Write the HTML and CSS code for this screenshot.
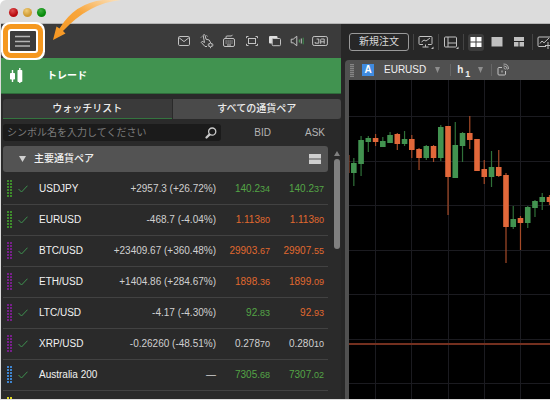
FILE: index.html
```html
<!DOCTYPE html>
<html lang="ja">
<head>
<meta charset="utf-8">
<title>トレード</title>
<meta name="viewport" content="width=device-width, initial-scale=1">
<link rel="stylesheet" href="styles.css">
</head>
<body>
<div class="window">
  <header class="titlebar">
    <span class="light light-red"></span>
    <span class="light light-yellow"></span>
    <span class="light light-green"></span>
  </header>
  <div class="workspace">
    <section class="sidebar">
      <div class="side-toolbar">
        <button class="menu-button" aria-label="メニュー">
          <svg width="16" height="12" viewBox="0 0 16 12"><path d="M0 1.5h15M0 6.5h15M0 11h15" stroke="#b4b4b4" stroke-width="1.3" fill="none"/></svg>
        </button>
        <div class="side-icons">
          <button class="icon" aria-label="メール"><svg width="16" height="16" viewBox="0 0 16 16"><rect x="2.5" y="3.5" width="11" height="9" rx="1.2"/><path d="M2.8 4.5 8 8.6l5.2-4.1"/></svg></button>
          <button class="icon" aria-label="操作設定"><svg width="16" height="16" viewBox="0 0 16 16"><path d="M8 13.5H6L2.2 9.3l1-1 2.3 1.2L4.2 2.6c0-1.3 1.6-1.4 1.9-.2L7 6.2l3.2.8 1 2M2 4.5l1-1M7.5 2.5l1 .8"/><circle cx="11.5" cy="12" r="1.8"/><path d="M11.5 9v1M11.5 14v1.2M8.6 12h1M13.5 12h1M9.5 10l.7.7M13 10.6l.6-.6M9.5 14l.7-.7M13 13.4l.6.6"/></svg></button>
          <button class="icon" aria-label="キーボード"><svg width="16" height="16" viewBox="0 0 16 16"><rect x="2.5" y="5.5" width="11" height="8" rx="1.5"/><path d="M5 5.2V4q0-1 1-1h4q1 0 1.5-1.2"/><path d="M4.5 8h7M4.5 10h7" stroke-dasharray="1.2 .8"/><path d="M6 12h4"/></svg></button>
          <button class="icon" aria-label="全画面"><svg width="16" height="16" viewBox="0 0 16 16"><rect x="4.5" y="5.5" width="7" height="5"/><path d="M2.5 5.2V3.5h2M11.5 3.5h2v1.7M2.5 10.8v1.7h2M11.5 12.5h2v-1.7"/></svg></button>
          <button class="icon" aria-label="ウィンドウ"><svg width="16" height="16" viewBox="0 0 16 16"><rect x="2" y="3" width="8.5" height="7.5" rx="1" fill="#dedede" stroke="none"/><rect x="5.2" y="5.5" width="8.3" height="7.2" rx="1" fill="#3b3b3b"/></svg></button>
          <button class="icon" aria-label="音声"><svg width="16" height="16" viewBox="0 0 16 16"><path d="M2.2 6.2h2l3.6-3v9.6l-3.6-3h-2z"/><path d="M10.3 6.5v3" stroke="#58a862"/><path d="M12.3 5.5v5" stroke="#bdbdbd"/><path d="M14.2 4.7v6.6" stroke="#3f9350"/></svg></button>
          <button class="icon" aria-label="日本語"><svg width="16" height="16" viewBox="0 0 16 16"><rect x=".6" y="3.5" width="14.8" height="9" rx="1.6"/><path d="M3.2 9v1.2h3.6V6M4.6 6h2.2M8.7 10.8V6.6q0-.6.7-.6h2.8v4.8M8.7 8.8h3.5"/></svg></button>
        </div>
      </div>
      <div class="page-head">
        <svg width="16" height="18" viewBox="0 0 16 18"><path d="M3.5 3v12M10.8 1v15" stroke="#fff" stroke-width="1.4"/><rect x="1" y="6" width="5" height="6.5" rx=".8" fill="#fff"/><rect x="8.5" y="3" width="4.8" height="12" rx=".8" fill="#fff"/></svg>
        <h1 class="page-title">トレード</h1>
      </div>
      <div class="tabs">
        <button class="tab tab-active">ウォッチリスト</button>
        <button class="tab">すべての通貨ペア</button>
      </div>
      <div class="search-row">
        <label class="search">
          <input class="search-input" type="text" placeholder="シンボル名を入力してください" aria-label="シンボル検索">
          <svg width="12" height="12" viewBox="0 0 12 12"><circle cx="7.2" cy="4.6" r="3.6" fill="none" stroke="#c8c8c8" stroke-width="1.3"/><path d="M4.4 7.6 1.5 10.5" stroke="#c8c8c8" stroke-width="2.2" stroke-linecap="round"/></svg>
        </label>
        <span class="col-label col-bid">BID</span>
        <span class="col-label col-ask">ASK</span>
      </div>
      <div class="list">
        <div class="list-main">
          <div class="group">
            <svg width="7" height="6" viewBox="0 0 7 6"><path d="M0 0h7L3.5 6z" fill="#d0d0d0"/></svg>
            <span class="group-name">主要通貨ペア</span>
            <svg width="12" height="10" viewBox="0 0 12 10"><path d="M0 0h12v4.4H0zM0 5.6h12V10H0z" fill="#cfcfcf"/></svg>
          </div>
          <table class="quotes">
            <colgroup><col class="c-mark"><col class="c-check"><col><col class="c-change"><col class="c-price"><col class="c-price"></colgroup>
            <tbody>
              <tr><td><i class="dots dots-green"></i></td><td><svg class="check" width="10" height="8" viewBox="0 0 10 8"><path d="M.5 4 3.5 7l6-6.3"/></svg></td><th scope="row">USDJPY</th><td class="num">+2957.3 (+26.72%)</td><td class="num up">140.2<small>34</small></td><td class="num up">140.2<small>37</small></td></tr>
              <tr><td><i class="dots dots-green"></i></td><td><svg class="check" width="10" height="8" viewBox="0 0 10 8"><path d="M.5 4 3.5 7l6-6.3"/></svg></td><th scope="row">EURUSD</th><td class="num">-468.7 (-4.04%)</td><td class="num down">1.113<small>80</small></td><td class="num down">1.113<small>80</small></td></tr>
              <tr><td><i class="dots dots-purple"></i></td><td><svg class="check" width="10" height="8" viewBox="0 0 10 8"><path d="M.5 4 3.5 7l6-6.3"/></svg></td><th scope="row">BTC/USD</th><td class="num">+23409.67 (+360.48%)</td><td class="num down">29903.<small>67</small></td><td class="num down">29907.<small>55</small></td></tr>
              <tr><td><i class="dots dots-purple"></i></td><td><svg class="check" width="10" height="8" viewBox="0 0 10 8"><path d="M.5 4 3.5 7l6-6.3"/></svg></td><th scope="row">ETH/USD</th><td class="num">+1404.86 (+284.67%)</td><td class="num down">1898.<small>36</small></td><td class="num down">1899.<small>09</small></td></tr>
              <tr><td><i class="dots dots-purple"></i></td><td><svg class="check" width="10" height="8" viewBox="0 0 10 8"><path d="M.5 4 3.5 7l6-6.3"/></svg></td><th scope="row">LTC/USD</th><td class="num">-4.17 (-4.30%)</td><td class="num up">92.<small>83</small></td><td class="num down">92.<small>93</small></td></tr>
              <tr><td><i class="dots dots-purple"></i></td><td><svg class="check" width="10" height="8" viewBox="0 0 10 8"><path d="M.5 4 3.5 7l6-6.3"/></svg></td><th scope="row">XRP/USD</th><td class="num">-0.26260 (-48.51%)</td><td class="num">0.278<small>70</small></td><td class="num">0.280<small>10</small></td></tr>
              <tr><td><i class="dots dots-blue"></i></td><td><svg class="check" width="10" height="8" viewBox="0 0 10 8"><path d="M.5 4 3.5 7l6-6.3"/></svg></td><th scope="row">Australia 200</th><td class="num">—</td><td class="num up">7305.<small>68</small></td><td class="num up">7307.<small>02</small></td></tr>
              <tr><td><i class="dots dots-yellow"></i></td><td></td><th></th><td></td><td></td><td></td></tr>
            </tbody>
          </table>
        </div>
        <div class="scrollbar">
          <svg width="6" height="5" viewBox="0 0 6 5"><path d="M3 0l3 5H0z" fill="#808080"/></svg>
          <div class="thumb"></div>
        </div>
      </div>
    </section>
    <main class="main">
      <div class="main-toolbar">
        <button class="order-button">新規注文</button>
        <i class="divider"></i>
        <button class="icon" aria-label="チャート"><svg width="16" height="16" viewBox="0 0 16 16"><path d="M5 10.5H1.8q-.8 0-.8-.8V3.3q0-.8.8-.8h11.4q.8 0 .8.8v6.4q0 .8-.8.8H10M7.5 10.5v2.3M4.5 13h6"/><path d="M3.5 8 6 6l2 1 4-3"/><path d="M15.5 12.5V15H13z" fill="#c2c2c2" stroke="none"/></svg></button>
        <i class="divider"></i>
        <button class="icon" aria-label="レイアウト"><svg width="16" height="16" viewBox="0 0 16 16"><rect x="1.5" y="3" width="12" height="10" rx="1"/><path d="M5 3v10M5 9h8.5"/><path d="M15.5 12.5V15H13z" fill="#c2c2c2" stroke="none"/></svg></button>
        <i class="divider"></i>
        <button class="icon icon-active" aria-label="4分割"><svg width="12" height="10" viewBox="0 0 12 10"><path d="M.5 0h5v4.400h-5zM6.500 0h5v4.400h-5zM.5 5.600h5V10h-5zM6.500 5.600h5V10h-5z" fill="#fff" stroke="none"/></svg></button>
        <button class="icon icon-layout" aria-label="1画面"><svg width="12" height="10" viewBox="0 0 12 10"><path d="M.5 0h11v9.5H.5z" fill="#c0c0c0" stroke="none"/></svg></button>
        <button class="icon icon-layout" aria-label="3分割"><svg width="12" height="10" viewBox="0 0 12 10"><path d="M1 0h10v4H1zM1 5h4.5v4.5H1zM6.5 5H11v4.5H6.5z" fill="#c0c0c0" stroke="none"/></svg></button>
        <i class="divider"></i>
        <button class="icon" aria-label="インジケーター追加"><svg width="16" height="16" viewBox="0 0 16 16"><path d="M9 12.5H2q-1 0-1-1V4q0-1 1-1h12"/><path d="M3 9.5 5 7l2 1.8L12 4M11 8v7M8 11.5h6"/></svg></button>
      </div>
      <div class="chart-head">
        <i class="grip"></i>
        <button class="account">A</button>
        <button class="drop"><span class="symbol">EURUSD</span><svg width="5" height="6" viewBox="0 0 5 6"><path d="M0 0h5L2.500 6z" fill="#8e8e8e"/></svg></button>
        <i class="divider"></i>
        <button class="drop drop-period"><span class="period">h<sub>1</sub></span><svg width="5" height="6" viewBox="0 0 5 6"><path d="M0 0h5L2.500 6z" fill="#8e8e8e"/></svg></button>
        <i class="divider"></i>
        <button class="icon icon-feed" aria-label="共有"><svg width="12" height="14" viewBox="0 0 12 14"><path d="M5 4.500H2q-1 0-1 1V11q0 1 1 1h5.500q1 0 1-1V8"/><path d="M5 7.500v2"/><path d="M6.500 4.800q1.800 0 1.800 1.800M6.500 2.800q3.800 0 3.800 3.800M6.500 1q5 0 5 5" stroke-width=".8"/></svg></button>
      </div>
      <div class="chart"><svg id="chart" width="100%" height="100%"></svg></div>
    </main>
  </div>
  <svg class="arrow" width="76" height="42" viewBox="0 0 76 42">
    <defs><linearGradient id="fade" x1="1" y1="0" x2="0" y2="1"><stop offset="0" stop-color="#fbe3c0"/><stop offset=".45" stop-color="#f8a63c"/><stop offset="1" stop-color="#f5951f"/></linearGradient></defs>
    <path d="M0 40 3.500 26.500 6.500 28.500Q22 3 50 0H68Q36 3 10 31L12.500 33.500z" fill="url(#fade)"/>
  </svg>
</div>
<script src="chart.js"></script>
</body>
</html>
```
FILE: styles.css
```css
* { box-sizing: border-box; }

body {
  margin: 0;
  background: #fff;
  color: #d0d0d0;
  font: 10px/14px "Liberation Sans", "Noto Sans CJK JP", sans-serif;
}

button, input {
  font: inherit;
  color: inherit;
  border: 0;
  margin: 0;
  padding: 0;
  background: none;
}

svg { display: block; flex: none; }

.window {
  position: relative;
  display: flex;
  flex-direction: column;
  height: 100vh;
  overflow: hidden;
  padding: 0 0 1px 1px;
  border-radius: 6px 0 0 0;
  background: #dcdcdc;
}

.titlebar {
  display: flex;
  align-items: center;
  gap: 5px;
  flex: none;
  height: 24px;
  padding: 2px 0 0 8px;
  border-bottom: 1px solid #b4b4b4;
}

.light { width: 9px; height: 9px; border-radius: 50%; }
.light-red { background: radial-gradient(circle at 40% 30%, #e05050, #b80c10 60%); }
.light-yellow { background: radial-gradient(circle at 40% 30%, #f0cc78, #d09c34 60%); }
.light-green { background: radial-gradient(circle at 40% 30%, #40b040, #088a0c 60%); }

.workspace { display: flex; flex: 1; min-height: 0; background: #272727; }

.sidebar {
  display: flex;
  flex-direction: column;
  flex: 0 0 340px;
  min-height: 0;
  background: #2a2a2a;
}

.side-toolbar {
  display: flex;
  align-items: center;
  justify-content: space-between;
  flex: none;
  height: 34px;
  padding: 0 13px 0 7px;
  background: #3b3b3b;
}

.menu-button {
  position: relative;
  z-index: 1;
  display: flex;
  align-items: center;
  justify-content: center;
  width: 30px;
  height: 24px;
  border: 2px solid #fff;
  border-radius: 3px;
  background: #3b3b3b;
  box-shadow: 0 0 0 5px #f5981f, 0 0 0 7px #fff;
}

.side-icons { display: flex; justify-content: space-between; width: 152px; }

.icon { display: flex; align-items: center; justify-content: center; }
.icon svg { fill: none; stroke: #c2c2c2; }

.page-head {
  display: flex;
  align-items: center;
  gap: 22px;
  flex: none;
  height: 36px;
  padding-left: 8px;
  border-bottom: 1px solid #2f6c3b;
  background: #419350;
}

.page-title { margin: 0; color: #fff; font-size: 10px; line-height: 14px; }

.tabs { display: flex; flex: none; margin: 5px 0 0 2px; }

.tab {
  flex: 1;
  height: 20px;
  border-radius: 0 3px 3px 0;
  background: #4a4a4a;
  color: #ececec;
  font-weight: 500;
}

.tab-active {
  margin-right: 1px;
  border-bottom: 1px solid #34743f;
  border-radius: 3px 0 0 0;
  background: #3a3a3a;
}

.search-row {
  display: flex;
  align-items: center;
  flex: none;
  margin: 5px 13px 5px 2px;
}

.search {
  display: flex;
  align-items: center;
  flex: 1;
  height: 17px;
  padding: 0 4px;
  border-radius: 3px;
  background: #1b1b1b;
}

.search-input { flex: 1; min-width: 0; outline: 0; }
.search-input::placeholder { color: #7c7c7c; opacity: 1; }

.col-label { color: #b4b4b4; text-align: right; }
.col-bid { width: 50px; }
.col-ask { width: 54px; margin-right: 3px; }

.list { display: flex; flex: 1; min-height: 0; }
.list-main { flex: 1; padding-left: 2px; overflow: hidden; }

.group {
  display: flex;
  align-items: center;
  gap: 8px;
  height: 26px;
  margin-bottom: 2px;
  padding: 0 7px 0 16px;
  border-radius: 3px;
  background: #535353;
}

.group-name { flex: 1; color: #f0f0f0; font-weight: 500; }

.quotes { width: 100%; border-collapse: separate; border-spacing: 0; table-layout: fixed; }
.quotes tr { height: 31px; }
.quotes td, .quotes th {
  padding: 0;
  border-bottom: 1px solid #424242;
  text-align: left;
  font-weight: 400;
  white-space: nowrap;
}
.quotes th { color: #f2f2f2; }
.quotes .num { padding-right: 4px; text-align: right; }
.quotes .up { color: #54a546; }
.quotes .down { color: #e0692f; }
.quotes small { font-size: 9px; }
.c-mark { width: 15px; }
.c-check { width: 21px; }
.c-change { width: 110px; }
.c-price { width: 54px; }

.dots {
  display: block;
  width: 5px;
  height: 18px;
  margin-left: 4px;
  background:
    repeating-linear-gradient(90deg, transparent 0 2px, #2a2a2a 2px 3px),
    repeating-linear-gradient(currentColor 0 2px, #2a2a2a 2px 3px);
}
.dots-green { color: #3f8c2c; }
.dots-purple { color: #77208a; }
.dots-blue { color: #3f85d0; }
.dots-yellow { color: #e0d820; }

.check { fill: none; stroke: #3f9350; }

.scrollbar {
  display: flex;
  flex-direction: column;
  align-items: center;
  gap: 3px;
  width: 13px;
  padding: 5px 0 0 5px;
}
.thumb { width: 6px; height: 90px; border-radius: 3px; background: #808080; }

.main { display: flex; flex-direction: column; flex: 1; min-width: 0; padding-left: 4px; }

.main-toolbar {
  display: flex;
  align-items: center;
  flex: none;
  gap: 4px;
  height: 36px;
  padding-left: 4px;
  overflow: hidden;
}
.main-toolbar > * { flex: none; }

.order-button {
  width: 60px;
  height: 18px;
  border: 1px solid #9a9a9a;
  border-radius: 3px;
  color: #d8d8d8;
}

.divider { width: 1px; height: 16px; background: #444; }

.icon-active { width: 16px; height: 17px; border-radius: 3px; background: #3d3d3d; }
.icon-layout { width: 18px; height: 17px; }

.chart-head {
  display: flex;
  align-items: center;
  flex: none;
  height: 20px;
  padding-left: 5px;
  border-radius: 4px 0 0 0;
  background: #505050;
}
.chart-head .divider { height: 12px; background: #666; }

.grip { width: 4px; height: 13px; background: repeating-linear-gradient(#858585 0 1px, #606060 1px 2px); }

.account {
  width: 12px;
  height: 12px;
  margin: 0 10px 0 8px;
  background: #3f8be0;
  color: #fff;
  font-weight: 700;
  line-height: 12px;
}

.drop { display: flex; align-items: center; gap: 9px; margin-right: 10px; color: #f0f0f0; }
.drop-period { gap: 8px; margin: 0 8px 0 6px; }
.period { font-weight: 700; }
.period sub { margin-left: 2px; font-size: 9px; line-height: 0; vertical-align: -4px; }
.icon-feed { margin-left: 5px; }

.chart { flex: 1; min-height: 0; border-left: 4px solid #505050; background: #000; overflow: hidden; }

.arrow { position: absolute; left: 53px; top: 0; z-index: 2; }
```
FILE: chart.js
```js
// Each candle: direction, body top, body bottom, wick top, wick bottom.
const candles = [
  ["d", 75, 93, 75, 93], ["u", 83, 93, 78, 106], ["u", 60, 84, 56, 96],
  ["u", 58, 62, 56, 72], ["d", 58, 62, 54, 66], ["u", 61, 67, 57, 67],
  ["u", 55, 63, 52, 63], ["d", 54, 64, 53, 70], ["u", 59, 64, 51, 66],
  ["d", 59, 70, 55, 78], ["d", 69, 78, 68, 90], ["u", 66, 78, 65, 80],
  ["d", 66, 78, 65, 82], ["u", 47, 78, 45, 81], ["d", 46, 97, 46, 135],
  ["u", 65, 98, 42, 98], ["u", 53, 66, 52, 82], ["d", 53, 60, 36, 69],
  ["d", 59, 91, 59, 91], ["d", 89, 97, 80, 104], ["u", 87, 97, 71, 107],
  ["d", 87, 96, 70, 97], ["d", 95, 147, 93, 183], ["u", 139, 147, 126, 149],
  ["d", 138, 143, 136, 170], ["u", 127, 143, 126, 148], ["u", 121, 128, 120, 137],
  ["u", 117, 122, 113, 130], ["d", 117, 122, 115, 125]
];
const chart = document.getElementById("chart");

function rect(x, y, width, height, fill) {
  const el = document.createElementNS("http://www.w3.org/2000/svg", "rect");
  Object.entries({ x, y, width, height, fill }).forEach(([k, v]) => el.setAttribute(k, v));
  chart.appendChild(el);
}

[26, 62, 99, 135, 171].forEach(x => rect(x, 0, 1, "100%", "#1b1b20"));
[36, 81, 125, 170, 214, 259, 303].forEach(y => rect(0, y, "100%", 1, "#1b1b20"));
rect(0, 263, "100%", 2, "#74301f");

candles.forEach(([dir, top, bottom, high, low], i) => {
  const x = 4.83 + 7.246 * (i - 1);
  rect(x - 0.6, high, 1.2, low - high, dir === "u" ? "#2f7038" : "#a54a28");
  rect(x - 2.8, top, 5.6, bottom - top, dir === "u" ? "#429350" : "#e2683a");
});
```
